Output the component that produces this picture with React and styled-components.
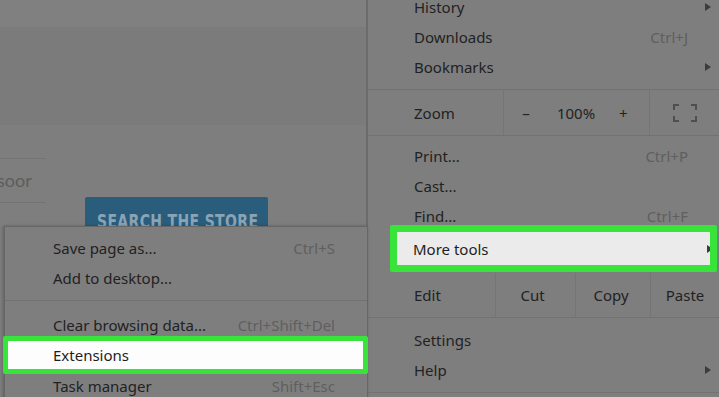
import React from "react";
import styled, { createGlobalStyle } from "styled-components";

const GlobalStyle = createGlobalStyle`
  html, body {
    margin: 0;
    padding: 0;
    background: #7b7b7b;
  }
  body {
    font-family: "Noto Sans", "Open Sans", sans-serif;
  }
`;

const Screen = styled.div`
  position: relative;
  width: 719px;
  height: 397px;
  overflow: hidden;
  display: flex;
  background: #7c7c7c;
`;

/* ---------- dimmed web page behind the menu ---------- */

const Page = styled.div`
  width: 366px;
  flex-shrink: 0;
  display: flex;
  flex-direction: column;
  border-right: 2px solid #6b6b6b;
`;

const Band = styled.div`
  height: ${(p) => p.$h}px;
  background: ${(p) => p.$bg};
`;

const PageBody = styled.div`
  flex: 1;
  display: flex;
  align-items: flex-start;
  gap: 39px;
  background: #7e7e7e;
`;

const SearchField = styled.div`
  width: 46px;
  height: 43px;
  margin-top: 33px;
  border-top: 1px solid #737373;
  border-bottom: 1px solid #737373;
  display: flex;
  align-items: center;
  overflow: hidden;
  font-family: "Lato", "Open Sans", sans-serif;
  font-size: 18px;
  color: #5d5d5d;
  span {
    margin-left: -3px;
    margin-top: -2px;
  }
`;

const StoreButton = styled.div`
  width: 183px;
  height: 44px;
  margin-top: 72px;
  box-sizing: border-box;
  padding: 12px 0 0 12px;
  background: #2a5d7c;
  border-radius: 2px;
  overflow: hidden;
  font-family: "DejaVu Sans", "Liberation Sans", sans-serif;
  font-weight: 700;
  font-size: 20px;
  color: #8aa3b5;
  white-space: nowrap;
`;

const StoreLabel = styled.span`
  display: inline-block;
  transform: scaleX(0.7);
  transform-origin: left center;
  letter-spacing: 0.5px;
`;

/* ---------- main chrome menu ---------- */

const Menu = styled.div`
  flex: 1;
  display: flex;
  flex-direction: column;
  margin-top: -8px;
  background: #7e7e7e;
`;

const Item = styled.div`
  height: 30px;
  flex-shrink: 0;
  display: flex;
  align-items: center;
  padding-left: ${(p) => p.$indent}px;
  padding-right: ${(p) => (p.$arrow ? 8 : p.$right)}px;
  margin-top: ${(p) => p.$mt || 0}px;
  font-size: 15px;
  color: #222;
  white-space: nowrap;
`;

const Shortcut = styled.span`
  margin-left: auto;
  color: #5f5f5f;
`;

const Arrow = styled.span`
  margin-left: auto;
  width: 0;
  height: 0;
  border-top: 4px solid transparent;
  border-bottom: 4px solid transparent;
  border-left: 6px solid #3c3c3c;
  margin-right: ${(p) => p.$mr || 0}px;
`;

const Divider = styled.div`
  height: 1px;
  flex-shrink: 0;
  background: #727272;
  margin-top: ${(p) => p.$mt || 0}px;
  margin-bottom: ${(p) => p.$mb || 0}px;
`;

const ButtonRow = styled.div`
  display: flex;
  flex-shrink: 0;
  height: ${(p) => p.$h}px;
  margin-top: ${(p) => p.$mt || 0}px;
  border-bottom: ${(p) => (p.$line ? "1px solid #727272" : "none")};
  font-size: 15px;
  color: #222;
`;

const RowLabel = styled.div`
  width: ${(p) => p.$w}px;
  box-sizing: border-box;
  padding-left: 46px;
  display: flex;
  align-items: center;
`;

const Cell = styled.div`
  box-sizing: border-box;
  width: ${(p) => (p.$w ? `${p.$w}px` : "auto")};
  flex: ${(p) => (p.$w ? "none" : 1)};
  display: flex;
  align-items: center;
  justify-content: center;
  padding-right: ${(p) => p.$pr || 0}px;
  border-left: ${(p) => (p.$plain ? "none" : "1px solid #757575")};
`;

const ZoomControls = styled.div`
  width: 145px;
  display: grid;
  grid-template-columns: 44px 56px 1fr;
  align-items: center;
  border-left: 1px solid #757575;
  border-right: 1px solid #757575;
  span:first-child {
    justify-self: center;
  }
  span:nth-child(2) {
    justify-self: center;
  }
  span:last-child {
    justify-self: start;
    padding-left: 15px;
  }
`;

const Highlight = styled.div`
  display: flex;
  align-items: center;
  flex-shrink: 0;
  height: ${(p) => p.$h}px;
  box-sizing: border-box;
  margin: ${(p) => p.$margin};
  padding-left: ${(p) => p.$indent}px;
  border: ${(p) => p.$bw}px solid #38e43a;
  border-radius: 2px;
  background: ${(p) => p.$bg};
  overflow: hidden;
  font-size: 15px;
  color: #1e1e1e;
  white-space: nowrap;
`;

/* ---------- "More tools" submenu ---------- */

const SubMenu = styled.div`
  position: absolute;
  left: 4px;
  top: 226px;
  width: 364px;
  height: 190px;
  box-sizing: border-box;
  display: flex;
  flex-direction: column;
  padding-top: 6px;
  background: #7e7e7e;
  border: 1px solid #666;
  box-shadow: -1px 0 3px rgba(0, 0, 0, 0.25);
`;

const FullscreenIcon = () => (
  <svg width="24" height="18" viewBox="0 0 24 18" fill="none" stroke="#4f4f4f" strokeWidth="2">
    <path d="M1 6V1h5M18 1h5v5M23 12v5h-5M6 17H1v-5" />
  </svg>
);

export default function App() {
  return (
    <>
      <GlobalStyle />
      <Screen>
        <Page>
          <Band $h={27} $bg="#808080" />
          <Band $h={98} $bg="#7b7b7b" />
          <PageBody>
            <SearchField>
              <span>soor</span>
            </SearchField>
            <StoreButton>
              <StoreLabel>SEARCH THE STORE</StoreLabel>
            </StoreButton>
          </PageBody>
        </Page>

        <Menu>
          <Item $indent={46} $arrow>
            History
            <Arrow />
          </Item>
          <Item $indent={46} $right={31}>
            Downloads
            <Shortcut>Ctrl+J</Shortcut>
          </Item>
          <Item $indent={46} $arrow>
            Bookmarks
            <Arrow />
          </Item>
          <Divider $mt={7} />
          <ButtonRow $h={45}>
            <RowLabel $w={135}>Zoom</RowLabel>
            <ZoomControls>
              <span>–</span>
              <span>100%</span>
              <span>+</span>
            </ZoomControls>
            <Cell $plain>
              <FullscreenIcon />
            </Cell>
          </ButtonRow>
          <Divider $mb={5} />
          <Item $indent={46} $right={31}>
            Print...
            <Shortcut>Ctrl+P</Shortcut>
          </Item>
          <Item $indent={46} $right={31}>
            Cast...
          </Item>
          <Item $indent={46} $right={31}>
            Find...
            <Shortcut>Ctrl+F</Shortcut>
          </Item>
          <Highlight $h={47} $bw={7} $margin="-6px 2px 0 22px" $indent={16} $bg="#ebebeb">
            More tools
            <Arrow $mr={-3} />
          </Highlight>
          <ButtonRow $h={44} $mt={1} $line>
            <RowLabel $w={127}>Edit</RowLabel>
            <Cell $w={80} $pr={6}>Cut</Cell>
            <Cell $w={75} $pr={4}>Copy</Cell>
            <Cell>Paste</Cell>
          </ButtonRow>
          <Item $indent={46} $right={31} $mt={7}>
            Settings
          </Item>
          <Item $indent={46} $arrow>
            Help
            <Arrow />
          </Item>
          <Divider $mt={7} />
        </Menu>

        <SubMenu>
          <Item $indent={48} $right={32}>
            Save page as...
            <Shortcut>Ctrl+S</Shortcut>
          </Item>
          <Item $indent={48} $right={32}>
            Add to desktop...
          </Item>
          <Divider $mt={7} />
          <Item $indent={48} $right={32} $mt={9}>
            Clear browsing data...
            <Shortcut>Ctrl+Shift+Del</Shortcut>
          </Item>
          <Highlight $h={38} $bw={5} $margin="-4px -1px 0 -2px" $indent={45} $bg="#fdfdfd">
            Extensions
          </Highlight>
          <Item $indent={48} $right={32} $mt={-3}>
            Task manager
            <Shortcut>Shift+Esc</Shortcut>
          </Item>
        </SubMenu>
      </Screen>
    </>
  );
}
